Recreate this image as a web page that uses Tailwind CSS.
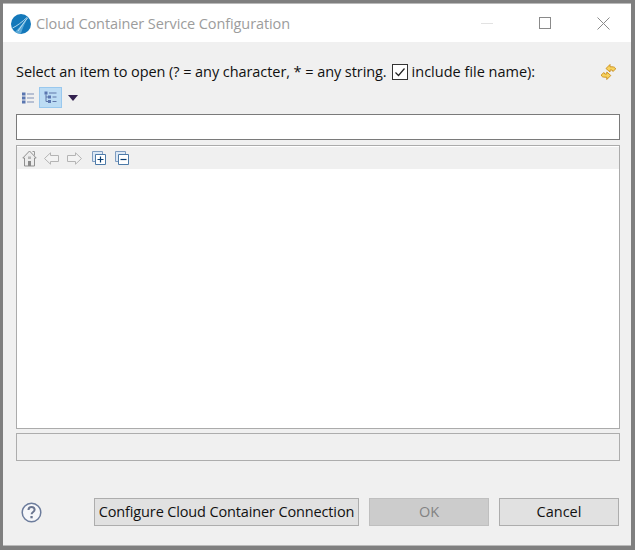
<!DOCTYPE html>
<html lang="en">
<head>
  <meta charset="UTF-8" />
  <title>Cloud Container Service Configuration</title>
  <script src="https://cdn.jsdelivr.net/npm/@tailwindcss/browser@4"></script>
</head>
<body class="w-[635px] h-[550px] overflow-hidden bg-[#7f7f7f] font-['Open_Sans',sans-serif]">
  <div class="ml-[3px] mt-[3px] mr-[4px] h-[543px] flex flex-col bg-[#f0f0f0] border-t border-b border-[#b9b9b9]">

    <!-- Title bar -->
    <div class="h-[38px] shrink-0 bg-white flex items-center pl-[8px]">
      <svg width="20" height="20" viewBox="0 0 20 20" class="mt-[1px]">
        <circle cx="10" cy="10" r="10" fill="#1378ba" />
        <path d="M4 18 C8 14 12 9 17 3.5 C14 9 11.5 14 10 19.5 L7 19.5 Z" fill="#5aa9d8" />
        <path d="M1.5 14 C6 12 11 8 16 3.5 M7 17 C10 13 13 8 17 3.5" stroke="#d8eef8" stroke-width="0.8" fill="none" />
      </svg>
      <span class="ml-[5px] mt-[1px] text-[14.5px] text-[#9c9c9c] tracking-[-0.1px]">Cloud Container Service Configuration</span>
      <div class="ml-auto flex items-center">
        <div class="w-[12px] h-px bg-[#e2e2e2]"></div>
        <div class="ml-[46px] w-[12px] h-[12px] border border-[#8a8a8a]"></div>
        <svg width="13" height="13" viewBox="0 0 13 13" class="ml-[46px] mr-[21px]">
          <path d="M0.5 0.5 L12.5 12.5 M12.5 0.5 L0.5 12.5" stroke="#8a8a8a" stroke-width="1" fill="none" />
        </svg>
      </div>
    </div>

    <!-- Content -->
    <div class="flex-1 flex flex-col pl-[13px] pr-[11px]">
      <div class="mt-[20px] h-[20px] flex items-center text-[14.5px] text-[#111]">
        <span class="tracking-[-0.07px]">Select an item to open (? = any character, * = any string.</span>
        <div class="ml-[5px] w-[16px] h-[16px] border-[1.5px] border-[#333] bg-white flex items-center justify-center">
          <svg width="12" height="12" viewBox="0 0 12 12"><path d="M1.5 6.5 L4.5 9.5 L10.5 2.5" stroke="#222" stroke-width="1.2" fill="none" /></svg>
        </div>
        <span class="ml-[4px] tracking-[0px]">include file name):</span>
        <svg width="15" height="16" viewBox="0 0 15 16" class="ml-auto mr-[4px]">
          <path d="M9 0.5 L5 4.5 L9 8 V6 H11 L12 7.5 L14.5 5 C14.5 3.5 13 2.8 11 2.8 H9 Z" fill="#f7d25e" stroke="#c98d1a" stroke-width="0.9" />
          <path d="M5 15.5 L9 11.5 L5 8 V10 H3 L2 8.5 L-0.5 11 C-0.5 12.5 1 13.2 3 13.2 H5 Z" fill="#f7d25e" stroke="#c98d1a" stroke-width="0.9" transform="translate(0.8 0)" />
        </svg>
      </div>

      <!-- View toolbar -->
      <div class="mt-[5px] h-[21px] flex items-center">
        <svg width="12" height="12" viewBox="0 0 12 12" class="ml-[6px]">
          <path d="M0 0.5h3.5v3h-3.5z M0 4.5h3.5v3h-3.5z M0 8.5h3.5v3h-3.5z" fill="#5a76b0" />
          <path d="M5 2h7 M5 6h7 M5 10h7" stroke="#7f8fb5" stroke-width="1" />
        </svg>
        <div class="ml-[5px] w-[23px] h-[21px] bg-[#bcdcf4] border border-[#99c8ee] flex items-center justify-center">
          <svg width="13" height="13" viewBox="0 0 13 13">
            <path d="M0.5 0.5h3v3h-3z M4 4.5h3v3h-3z M4 9h3v3h-3z" fill="#5a76b0" />
            <path d="M2 3.5V10.5H4 M2 6H4 M8.5 6h4 M8.5 10.5h4 M5 2h7.5" stroke="#5f76a8" stroke-width="1" fill="none" />
          </svg>
        </div>
        <svg width="10" height="6" viewBox="0 0 10 6" class="ml-[6px]"><path d="M0 0H10L5 6Z" fill="#33214f" /></svg>
      </div>

      <!-- Filter input -->
      <input type="text" class="mt-[6px] w-full h-[26px] shrink-0 bg-white border border-[#7a7a7a] outline-none" />

      <!-- Tree panel -->
      <div class="mt-[5px] h-[284px] shrink-0 border border-[#ababab] bg-white flex flex-col">
        <div class="mt-[1px] h-[22px] bg-[#f0f0f0] flex items-center pl-[5px]">
          <svg width="15" height="17" viewBox="0 0 15 17">
            <path d="M10.5 1.5h2v4" fill="none" stroke="#9a9a9a" stroke-width="1" />
            <path d="M7.5 1 L0.8 8 H2.5 V16 H12.5 V8 H14.2 Z" fill="#ececec" stroke="#8f8f8f" stroke-width="1" />
            <path d="M6 11h3v5h-3z" fill="#8a8a8a" />
            <path d="M6 6.5h3v2.5h-3z" fill="#b5b5b5" />
          </svg>
          <svg width="15" height="13" viewBox="0 0 15 13" class="ml-[7px]"><path d="M0.5 6.5 L6.5 0.8 V3.5 H14.5 V9.5 H6.5 V12.2 Z" fill="#f3f3f3" stroke="#b4b4b4" stroke-width="1" /></svg>
          <svg width="15" height="13" viewBox="0 0 15 13" class="ml-[8px]"><path d="M14.5 6.5 L8.5 0.8 V3.5 H0.5 V9.5 H8.5 V12.2 Z" fill="#f3f3f3" stroke="#b4b4b4" stroke-width="1" /></svg>
          <svg width="14" height="14" viewBox="0 0 14 14" class="ml-[10px]">
            <path d="M0.5 0.5h10v10h-10z" fill="#dce8f5" stroke="#7e9cc0" stroke-width="1" />
            <path d="M3.5 3.5h10v10h-10z" fill="#fff" stroke="#4d7aa8" stroke-width="1" />
            <path d="M5.5 8.5h6 M8.5 5.5v6" stroke="#0b3f73" stroke-width="1.2" />
          </svg>
          <svg width="14" height="14" viewBox="0 0 14 14" class="ml-[9px]">
            <path d="M0.5 0.5h10v10h-10z" fill="#dce8f5" stroke="#7e9cc0" stroke-width="1" />
            <path d="M3.5 3.5h10v10h-10z" fill="#fff" stroke="#4d7aa8" stroke-width="1" />
            <path d="M5.5 8.5h6" stroke="#0b3f73" stroke-width="1.2" />
          </svg>
        </div>
      </div>

      <!-- Status -->
      <div class="mt-[4px] h-[28px] shrink-0 border border-[#adadad]"></div>

      <!-- Buttons -->
      <div class="mt-[37px] h-[28px] flex items-center text-[14.5px]">
        <svg width="21" height="21" viewBox="0 0 21 21" class="ml-[5px]">
          <circle cx="10.5" cy="10.5" r="9.3" fill="#f6f7fa" stroke="#6c7c9c" stroke-width="1.5" />
          <path d="M7.5 8 C7.5 5.8 9 5 10.5 5 C12.3 5 13.6 6.1 13.6 7.8 C13.6 10 10.6 10 10.6 12.3" fill="none" stroke="#6b7690" stroke-width="2" />
          <path d="M9.4 14h2.3v2.3h-2.3z" fill="#6b7690" />
        </svg>
        <button class="ml-[52px] w-[265px] h-[28px] bg-[#e1e1e1] border border-[#adadad] text-[#111] tracking-[-0.14px] whitespace-nowrap">Configure Cloud Container Connection</button>
        <button class="ml-[10px] w-[120px] h-[28px] bg-[#cccccc] border border-[#bfbfbf] text-[#838383]">OK</button>
        <button class="ml-[10px] w-[120px] h-[28px] bg-[#e1e1e1] border border-[#adadad] text-[#111]">Cancel</button>
      </div>
    </div>
  </div>
</body>
</html>
